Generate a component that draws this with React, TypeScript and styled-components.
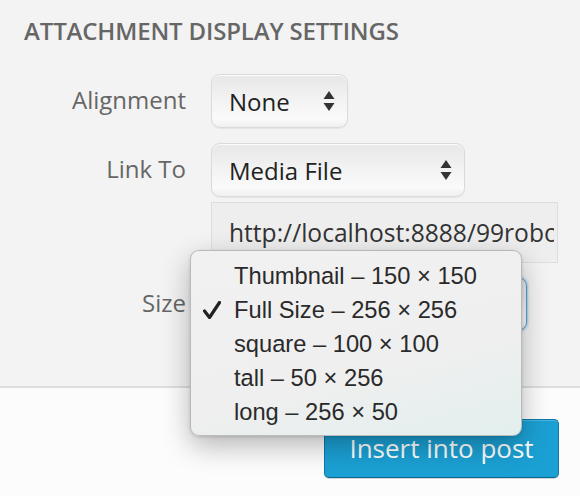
import React from 'react'
import styled, { createGlobalStyle } from 'styled-components'

const GlobalStyle = createGlobalStyle`
    html, body {
        margin: 0;
        padding: 0;
        background: #fcfcfc;
    }
    body {
        font-family: "Open Sans", "Liberation Sans", sans-serif;
        -webkit-font-smoothing: antialiased;
    }
`

const Frame = styled.div`
    width: 580px;
    height: 496px;
    display: flex;
    flex-direction: column;
    overflow: hidden;
`

const Settings = styled.section`
    position: relative;
    flex: 1;
    background: #f3f3f3;
    padding: 16px 22px 0 24px;
`

const Heading = styled.h2`
    margin: 0 0 28px;
    font-size: 24px;
    line-height: 30px;
    font-weight: 600;
    text-transform: uppercase;
    color: #666;
    letter-spacing: -0.15px;
`

const Row = styled.div<{ $top?: number }>`
    display: grid;
    grid-template-columns: 162px auto;
    column-gap: 25px;
    align-items: center;
    margin-top: ${p => p.$top ?? 0}px;
`

const Label = styled.span`
    text-align: right;
    font-size: 24px;
    line-height: 32px;
    color: #666;
    margin-top: -2px;
`

const Select = styled.div<{ $width: number; $focus?: boolean }>`
    width: ${p => p.$width}px;
    height: 54px;
    box-sizing: border-box;
    display: flex;
    align-items: center;
    justify-content: space-between;
    padding: 0 12px 0 17px;
    border-radius: 9px;
    border: 1px solid ${p => (p.$focus ? '#5b9dd9' : '#dadada')};
    background: linear-gradient(to bottom, #e7e7e7 0%, #f2f2f2 45%, #fafafa 85%, #efefef 100%);
    box-shadow: ${p => (p.$focus
        ? '0 0 3px rgba(30, 140, 190, 0.8)'
        : 'inset 0 1px 1px rgba(255,255,255,0.9), 0 1px 1px rgba(0,0,0,0.06)')};
    font-size: 24px;
    color: #222;
`

const UrlInput = styled.input`
    width: 347px;
    height: 61px;
    box-sizing: border-box;
    padding: 0 3px 0 17px;
    border: 1px solid #dedede;
    background: #eeeeee;
    font-family: "Open Sans", "Liberation Sans", sans-serif;
    font-size: 24.6px;
    color: #333;
    outline: none;
`

const Menu = styled.ul`
    position: absolute;
    left: 190px;
    top: 250px;
    width: 332px;
    height: 186px;
    box-sizing: border-box;
    margin: 0;
    padding: 8px 0 0;
    list-style: none;
    border-radius: 9px;
    border: 1px solid rgba(0, 0, 0, 0.22);
    background: linear-gradient(165deg, #f1f1f1 0%, #efefef 62%, #e2efee 100%);
    box-shadow: 0 10px 28px rgba(0, 0, 0, 0.28), 0 1px 3px rgba(0, 0, 0, 0.15);
    z-index: 2;
`

const Item = styled.li`
    position: relative;
    height: 34px;
    line-height: 34px;
    padding-left: 43px;
    font-family: "Liberation Sans", Arial, sans-serif;
    font-size: 23.7px;
    color: #2a2a2a;
    white-space: nowrap;
`

const Check = styled.svg`
    position: absolute;
    left: 12px;
    top: 8px;
`

const Toolbar = styled.footer`
    height: 110px;
    border-top: 2px solid #dddddd;
    background: #fcfcfc;
    display: flex;
    justify-content: flex-end;
    align-items: flex-start;
    padding: 31px 21px 0 0;
    box-sizing: border-box;
`

const PrimaryButton = styled.button`
    width: 235px;
    height: 59px;
    border-radius: 5px;
    border: 1px solid #0e78ab;
    border-bottom-color: #0a6592;
    background: #1ba0d3;
    box-shadow: inset 0 1px 0 rgba(120, 200, 230, 0.5), 0 1px 0 rgba(0, 0, 0, 0.15);
    color: #fff;
    font-family: "Open Sans", "Liberation Sans", sans-serif;
    font-size: 26px;
    padding: 0 0 2px;
    cursor: pointer;
`

const Arrows = () => (
    <svg width="12" height="20" viewBox="0 0 12 20">
        <path d="M6 0 L11.5 8 L0.5 8 Z" fill="#333" />
        <path d="M0.5 12 L11.5 12 L6 20 Z" fill="#333" />
    </svg>
)

const sizes = [
    { label: 'Thumbnail – 150 × 150' },
    { label: 'Full Size – 256 × 256', checked: true },
    { label: 'square – 100 × 100' },
    { label: 'tall – 50 × 256' },
    { label: 'long – 256 × 50' },
]

export default function App() {
    return (
        <>
            <GlobalStyle />
            <Frame>
                <Settings>
                    <Heading>Attachment Display Settings</Heading>
                    <Row>
                        <Label>Alignment</Label>
                        <Select $width={137}>
                            <span>None</span>
                            <Arrows />
                        </Select>
                    </Row>
                    <Row $top={15}>
                        <Label>Link To</Label>
                        <Select $width={254}>
                            <span>Media File</span>
                            <Arrows />
                        </Select>
                    </Row>
                    <Row $top={5}>
                        <span />
                        <UrlInput readOnly value="http://localhost:8888/99robots/wp-content/uploads/2014/robot.png" />
                    </Row>
                    <Row $top={14}>
                        <Label>Size</Label>
                        {/* value is hidden under the open menu */}
                        <Select $width={316} $focus>
                            <span />
                            <Arrows />
                        </Select>
                    </Row>
                    <Menu>
                        {sizes.map(s => (
                            <Item key={s.label}>
                                {s.checked && (
                                    <Check width="18" height="18" viewBox="0 0 18 18">
                                        <path d="M1.5 10 L6.5 16.5 L16.5 1.5" fill="none" stroke="#222" strokeWidth="3.2" strokeLinejoin="round" strokeLinecap="round" />
                                    </Check>
                                )}
                                {s.label}
                            </Item>
                        ))}
                    </Menu>
                </Settings>
                <Toolbar>
                    <PrimaryButton>Insert into post</PrimaryButton>
                </Toolbar>
            </Frame>
        </>
    )
}
